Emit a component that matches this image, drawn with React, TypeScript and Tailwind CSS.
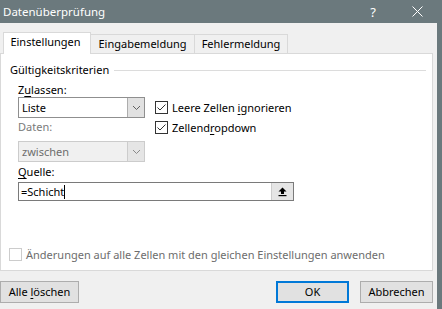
import React from "react";

function Chevron({ color = "#606060" }: { color?: string }) {
  return (
    <svg width="9" height="6" viewBox="0 0 9 6">
      <path d="M1 1 L4.5 4.5 L8 1" fill="none" stroke={color} strokeWidth="1" />
    </svg>
  );
}

function Check() {
  return (
    <svg width="11" height="11" viewBox="0 0 11 11">
      <path d="M1.5 5.5 L4 8 L9.5 2.5" fill="none" stroke="#333" strokeWidth="1" />
    </svg>
  );
}

function CheckBox({ checked, disabled }: { checked?: boolean; disabled?: boolean }) {
  return (
    <div
      className={
        "w-[13px] h-[13px] border flex items-center justify-center bg-white shrink-0 " +
        (disabled ? "border-[#cccccc]" : "border-[#333333]")
      }
    >
      {checked ? <Check /> : null}
    </div>
  );
}

export default function App() {
  return (
    <div className="w-[442px] h-[309px] bg-[#f0f0f0] flex flex-col overflow-hidden text-[11px] text-black font-['Noto_Sans','Segoe_UI',sans-serif]">
      {/* Title bar */}
      <div className="h-[23px] bg-[#6b797d] flex items-center text-white shrink-0">
        <span className="pl-[3px] leading-[16px] text-[11.5px]">Datenüberprüfung</span>
        <span className="ml-auto w-[10px] text-center leading-[16px] text-[13px]">?</span>
        <div className="ml-[34px] mr-[19px] w-[11px] h-[11px]">
          <svg width="11" height="11" viewBox="0 0 11 11">
            <path d="M0.5 0.5 L10.5 10.5 M10.5 0.5 L0.5 10.5" stroke="#ffffff" strokeWidth="1" />
          </svg>
        </div>
      </div>

      <div className="flex flex-1">
        <div className="flex-1 flex flex-col">
          {/* Tabs */}
          <div className="mt-[9px] h-[22px] -mb-px flex items-end pl-[3px] relative z-10">
            <div className="w-[88px] h-[22px] bg-white border border-b-0 border-[#d9d9d9] flex items-center justify-center pb-[2px] pr-[3px]">
              Einstellungen
            </div>
            <div className="w-[104px] h-[20px] border border-l-0 border-[#d9d9d9] flex items-center justify-center">
              Eingabemeldung
            </div>
            <div className="w-[93px] h-[20px] border border-l-0 border-[#d9d9d9] flex items-center justify-center">
              Fehlermeldung
            </div>
          </div>

          {/* Panel */}
          <div className="w-[433px] h-[218px] bg-white border border-[#d9d9d9] flex flex-col">
            <div className="mt-[8px] h-[16px] flex items-center">
              <span className="pl-[9px] leading-[16px]">Gültigkeitskriterien</span>
              <div className="flex-1 h-px bg-[#dcdcdc] ml-[5px] mr-[6px]" />
            </div>

            <div className="pl-[17px] flex flex-col">
              <div className="mt-[5px] h-[14px] leading-[13px]">
                Z<span className="underline underline-offset-2">u</span>lassen:
              </div>
              <div className="flex">
                <div className="w-[127px] flex flex-col">
                  {/* select 1 */}
                  <div className="h-[21px] border border-[#8f8f8f] flex">
                    <div className="flex-1 pl-[3px] flex items-center leading-[16px]">Liste</div>
                    <div className="w-[17px] bg-[#e1e1e1] border-l border-[#adadad] flex items-center justify-center">
                      <Chevron />
                    </div>
                  </div>
                  <div className="mt-px h-[16px] leading-[16px] text-[#7a7a7a]">Daten:</div>
                  {/* select 2 disabled */}
                  <div className="mt-[6px] h-[21px] border border-[#cccccc] bg-[#f0f0f0] flex">
                    <div className="flex-1 pl-[3px] flex items-center leading-[16px] text-[#6d6d6d]">zwischen</div>
                    <div className="w-[17px] bg-[#e5e5e5] border-l border-[#cccccc] flex items-center justify-center">
                      <Chevron color="#8a8a8a" />
                    </div>
                  </div>
                </div>
                <div className="ml-[10px] flex flex-col pt-[4px] gap-[7px]">
                  <div className="flex items-center h-[13px]">
                    <CheckBox checked />
                    <span className="ml-[4px] leading-[13px]">
                      Leere Zellen <span className="underline underline-offset-2">i</span>gnorieren
                    </span>
                  </div>
                  <div className="flex items-center h-[13px]">
                    <CheckBox checked />
                    <span className="ml-[4px] leading-[13px]">
                      Zellend<span className="underline underline-offset-2">r</span>opdown
                    </span>
                  </div>
                </div>
              </div>

              <div className="mt-[2px] h-[16px] leading-[16px]">
                <span className="underline underline-offset-2">Q</span>uelle:
              </div>
              <div className="mt-[2px] w-[276px] h-[19px] border border-[#7a7a7a] flex">
                <div className="flex-1 pl-[2px] flex items-center leading-[16px]">
                  <span>=Schicht</span>
                  <span className="inline-block w-px h-[14px] bg-black" />
                </div>
                <div className="w-[22px] bg-[#e5e5e5] border-l border-[#cccccc] flex items-center justify-center">
                  <svg width="9" height="10" viewBox="0 0 9 10">
                    <path d="M4.5 0.5 L8.5 4.5 L6 4.5 L6 7 L3 7 L3 4.5 L0.5 4.5 Z" fill="#000" />
                    <rect x="0.5" y="8" width="8" height="1.2" fill="#000" />
                  </svg>
                </div>
              </div>
            </div>

            <div className="mt-auto mb-[9px] ml-[8px] flex items-center h-[13px]">
              <CheckBox disabled />
              <span className="ml-[4px] leading-[13px] text-[#6d6d6d]">
                Änderungen auf alle Zellen mit den gleichen Einstellungen anwenden
              </span>
            </div>
          </div>

          {/* Footer */}
          <div className="mt-[10px] flex pr-[4px]">
            <button className="w-[79px] h-[22px] bg-[#e1e1e1] border border-[#adadad] flex items-center justify-center leading-[16px]">
              <span>
                Alle <span className="underline underline-offset-2">l</span>öschen
              </span>
            </button>
            <button className="ml-auto w-[73px] h-[22px] bg-[#e1e1e1] border-2 border-[#0078d7] flex items-center justify-center leading-[16px]">
              OK
            </button>
            <button className="ml-[11px] w-[73px] h-[22px] bg-[#e1e1e1] border border-[#adadad] flex items-center justify-center leading-[16px]">
              Abbrechen
            </button>
          </div>
        </div>
        <div className="w-[5px] bg-[#6b797d]" />
      </div>
    </div>
  );
}
